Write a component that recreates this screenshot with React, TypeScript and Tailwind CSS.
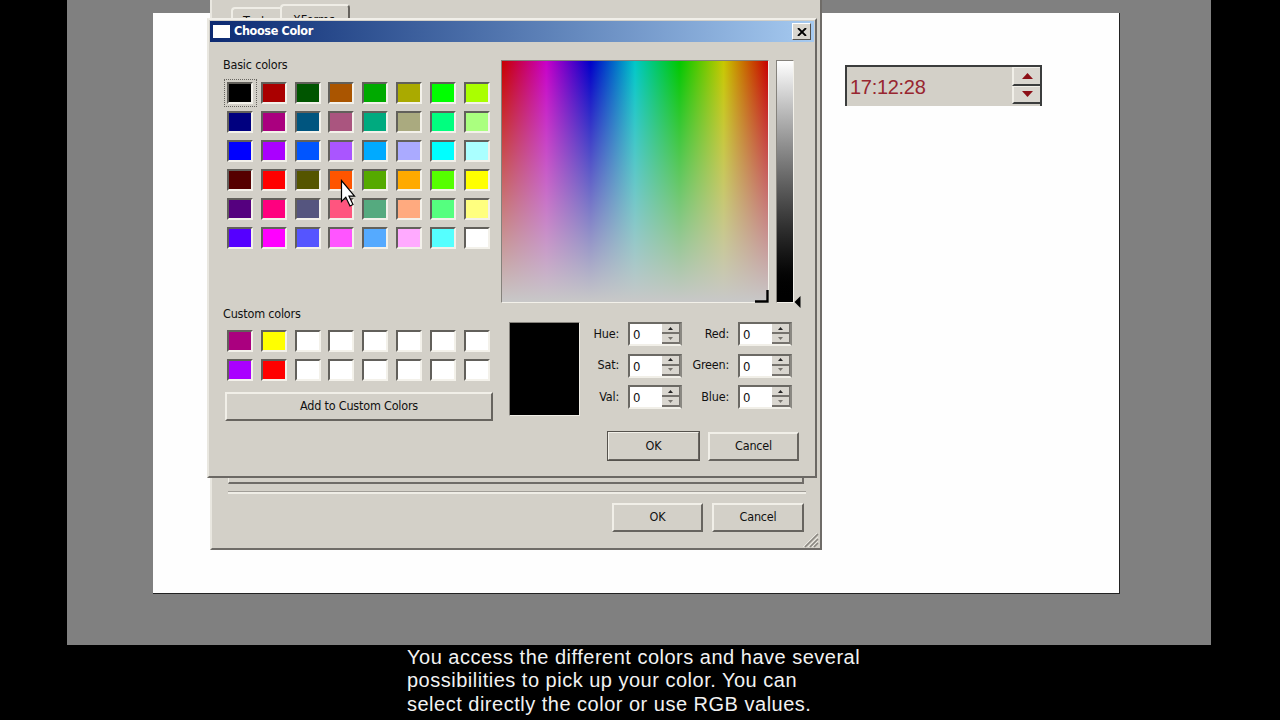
import clsx from 'clsx';
import type { ReactNode } from 'react';

// Standard palette: columns go through green, then red; rows go through blue
const basicColors = Array.from({ length: 48 }, (_, i) => {
  const col = i % 8;
  const row = Math.floor(i / 8);
  const r = (col % 2) * 170 + (row > 2 ? 85 : 0);
  const g = Math.floor(col / 2) * 85;
  const b = [0, 127, 255][row % 3];
  return `rgb(${r}, ${g}, ${b})`;
});

const customColors = [
  '#aa007f', '#ffff00', '#fff', '#fff', '#fff', '#fff', '#fff', '#fff',
  '#aa00ff', '#ff0000', '#fff', '#fff', '#fff', '#fff', '#fff', '#fff',
];

const hsv = ['Hue:', 'Sat:', 'Val:'];
const rgb = ['Red:', 'Green:', 'Blue:'];

function Swatches({ colors, selected }: { colors: string[]; selected?: number }) {
  return (
    <div className="grid grid-cols-[repeat(8,33.8px)] auto-rows-[29px]">
      {colors.map((color, i) => (
        <div key={i} className="relative">
          <div
            className="w-[26px] h-[22px] border-2 border-t-[#62605b] border-l-[#62605b] border-r-[#f3f1ea] border-b-[#f3f1ea]"
            style={{ backgroundColor: color }}
          />
          {i === selected && (
            <div className="absolute -left-[3px] -top-[3px] w-[33px] h-[28px] border border-dotted border-[#66645f]" />
          )}
        </div>
      ))}
    </div>
  );
}

function Button({ children, className, isDefault }: { children: ReactNode; className?: string; isDefault?: boolean }) {
  return (
    <button
      className={clsx(
        'flex items-center justify-center bg-[#d3d0c8] text-[12.5px] tracking-[-0.2px] border-2 border-t-[#f1efe8] border-l-[#f1efe8] border-r-[#67645f] border-b-[#67645f]',
        isDefault && 'outline outline-1 -outline-offset-1 outline-[#55524d]',
        className,
      )}
    >
      {children}
    </button>
  );
}

function SpinBox() {
  return (
    <div className="w-[54px] h-[24px] flex bg-white border-2 border-t-[#6b6964] border-l-[#6b6964] border-r-[#8a8882] border-b-[#f1efe8]">
      <span className="flex-1 pl-[3px] text-[13px] leading-[21px]">0</span>
      <div className="w-[18px] flex flex-col">
        <div className="flex-1 flex items-center justify-center bg-[#d9d6cf] border-b-2 border-r border-[#75726d]">
          <svg width="5" height="3" viewBox="0 0 5 3"><path d="M0 3 2.5 0 5 3z" fill="#222" /></svg>
        </div>
        <div className="flex-1 flex items-center justify-center bg-[#d9d6cf] border-b-2 border-r border-[#75726d]">
          <svg width="5" height="3" viewBox="0 0 5 3"><path d="M0 0h5L2.5 3z" fill="#77746e" /></svg>
        </div>
      </div>
    </div>
  );
}

function SpinColumn({ labels, className }: { labels: string[]; className: string }) {
  return (
    <div className={clsx('flex flex-col gap-[7.5px]', className)}>
      {labels.map((label) => (
        <div key={label} className="flex items-center justify-end gap-[9px] text-[12.5px] tracking-[-0.2px]">
          <span>{label}</span>
          <SpinBox />
        </div>
      ))}
    </div>
  );
}

function ParentWindow() {
  return (
    <div className="absolute left-[143px] top-0 w-[612px] h-[550px] flex flex-col bg-[#d3d0c8] border-l-2 border-l-[#e9e7e0] border-r-2 border-r-[#6f6c68] border-b-2 border-b-[#6f6c68]">
      <div className="flex items-end h-[22px] pl-[19px] text-[12.5px] leading-[15px]">
        <div className="w-[49px] h-[15px] pl-[10px] pt-[4px] border-t-2 border-l-2 border-[#efede6] rounded-tl-sm">Text</div>
        <div className="w-[70px] h-[18px] pl-[11px] pt-[6px] border-t-2 border-l-2 border-t-[#efede6] border-l-[#efede6] border-r-2 border-r-[#65625d] rounded-t-sm">XForms</div>
      </div>
      <div className="ml-[16px] w-[576px] h-[462px] border-l border-l-[#efede6] border-r-2 border-r-[#6f6c68] border-b-2 border-b-[#6f6c68]" />
      <div className="mt-[7px] ml-[16px] w-[578px] h-[3px] border-t border-t-[#a19e98] border-b-2 border-b-[#efede6]" />
      <div className="mt-[9px] pr-[16px] flex justify-end gap-[9px]">
        <Button className="w-[91px] h-[29px]">OK</Button>
        <Button className="w-[92px] h-[29px]">Cancel</Button>
      </div>
      <svg className="absolute right-0 bottom-0" width="17" height="16" viewBox="0 0 17 16">
        <path d="M2 15 15 2M7 15l8-8M11 15l4-4" stroke="#8b8882" strokeWidth="1.6" />
        <path d="M0 15 14 1M5 15 15 5M9 15l6-6" stroke="#f1efe8" strokeWidth="0.8" />
      </svg>
    </div>
  );
}

function ColorDialog() {
  return (
    <div className="absolute left-[140px] top-[18px] w-[610px] h-[460px] flex flex-col bg-[#d3d0c8] border-t-2 border-t-[#f1efe9] border-l-2 border-l-[#e9e7e0] border-r-2 border-r-[#6b6864] border-b-2 border-b-[#6b6864]">
      <div className="mx-px mt-px h-[21px] flex items-center pl-[3px] pr-[3px] bg-linear-to-r from-[#0d2a72] to-[#a6caf0]">
        <div className="w-[17px] h-[13px] bg-white" />
        <span className="ml-[4px] flex-1 text-[12.5px] font-bold tracking-[-0.35px] text-white">Choose Color</span>
        <div className="w-[19px] h-[17px] flex items-center justify-center bg-[#d9d6cf] border border-t-white border-l-white border-r-[#55524d] border-b-[#55524d]">
          <svg width="10" height="8" viewBox="0 0 10 8"><path d="M1 0 9 8M9 0 1 8" stroke="#000" strokeWidth="1.8" /></svg>
        </div>
      </div>

      <div className="flex pl-[14px]">
        {/* Palettes */}
        <div className="w-[278px] pt-[14px]">
          <div className="h-[26px] text-[12.5px] leading-[17px] tracking-[-0.2px]">Basic colors</div>
          <div className="pl-[4px]">
            <Swatches colors={basicColors} selected={0} />
          </div>
          <div className="mt-[49px] h-[25px] text-[12.5px] leading-[17px] tracking-[-0.2px]">Custom colors</div>
          <div className="pl-[4px]">
            <Swatches colors={customColors} />
          </div>
          <Button className="mt-[4px] ml-[2px] w-[268px] h-[29px]">Add to Custom Colors</Button>
        </div>

        {/* Hue/saturation field, value bar and numeric entry */}
        <div className="w-[300px] pt-[18px]">
          <div className="flex">
            <div className="relative w-[268px] h-[243px] border border-t-[#85827c] border-l-[#85827c] border-r-[#f3f1ea] border-b-[#f3f1ea] bg-[linear-gradient(to_top,#c8c8c8,rgba(200,200,200,0)),linear-gradient(to_right,#c80000,#c800c8,#0000c8,#00c8c8,#00c800,#c8c800,#c80000)]">
              <svg className="absolute -right-px -bottom-px" width="14" height="13" viewBox="0 0 14 13">
                <path d="M0 11.5h12.5V0" fill="none" stroke="#000" strokeWidth="2.4" />
              </svg>
            </div>
            <div className="ml-[7px] w-[18px] h-[243px] border border-t-[#85827c] border-l-[#85827c] border-r-[#f3f1ea] border-b-[#f3f1ea] bg-linear-to-b from-white to-black" />
            <svg className="mt-[236px]" width="7" height="12" viewBox="0 0 7 12"><path d="M6.5 0v12L0.5 6z" fill="#000" /></svg>
          </div>
          <div className="-mt-[5px] pt-[19px] pl-[8px] flex">
            <div className="w-[71px] h-[94px] bg-black border border-t-[#85827c] border-l-[#85827c] border-r-[#efede6] border-b-[#efede6]" />
            <SpinColumn labels={hsv} className="w-[102px]" />
            <SpinColumn labels={rgb} className="w-[110px]" />
          </div>
          <div className="mt-[15px] flex justify-end items-center gap-[8px] pr-[2px]">
            <Button className="w-[93px] h-[30px]" isDefault>OK</Button>
            <Button className="w-[91px] h-[29px]">Cancel</Button>
          </div>
        </div>
      </div>
    </div>
  );
}

function TimeField() {
  return (
    <div className="absolute left-[778px] top-[65px] w-[197px] h-[41px] flex bg-[#d3d0c8] border-t-2 border-l-2 border-r-2 border-[#3b3d3d] font-['Liberation_Sans',sans-serif]">
      <span className="flex-1 pl-[3px] pt-px text-[20px] leading-[38px] tracking-[-0.3px] text-[#982630]">17:12:28</span>
      <div className="w-[28px] h-[37px] flex flex-col">
        <div className="flex-1 flex items-center justify-center bg-[#d9d6cf] border-t border-l-2 border-[#f1efe8] border-b-2 border-b-[#3b3d3d]">
          <svg width="11" height="6" viewBox="0 0 11 6"><path d="M0 6 5.5 0 11 6z" fill="#8c0f16" /></svg>
        </div>
        <div className="flex-1 flex items-center justify-center bg-[#d9d6cf] border-t border-l-2 border-[#f1efe8] border-b-2 border-b-[#3b3d3d]">
          <svg width="11" height="6" viewBox="0 0 11 6"><path d="M0 0h11L5.500 6z" fill="#8c0f16" /></svg>
        </div>
      </div>
    </div>
  );
}

export default function App() {
  return (
    <div className="w-[1280px] h-[720px] overflow-hidden flex flex-col bg-black text-[#111] font-['DejaVu_Sans_Condensed','DejaVu_Sans',sans-serif]">
      <main className="relative ml-[67px] w-[1144px] h-[645px] shrink-0 pt-[13px] pl-[86px] bg-[#808080]">
        <div className="w-[967px] h-[581px] bg-[#fefefe] border-r border-b border-[#222]" />
        <ParentWindow />
        <ColorDialog />
        <TimeField />
        <svg className="absolute left-[273px] top-[179px]" width="17" height="29" viewBox="0 0 17 29">
          <path d="M1.500 1.500v21l4.300-4.300 4.200 8.800 3-1.500-4-8.300h5.500z" fill="#fff" stroke="#000" strokeWidth="1.200" />
        </svg>
      </main>
      <p className="ml-[407px] pt-px text-[20px] leading-[23.400px] tracking-[0.5px] whitespace-pre text-[#f2f2f2] font-['Liberation_Sans',sans-serif]">
        {'You access the different colors and have several\npossibilities to pick up your color. You can\nselect directly the color or use RGB values.'}
      </p>
    </div>
  );
}
